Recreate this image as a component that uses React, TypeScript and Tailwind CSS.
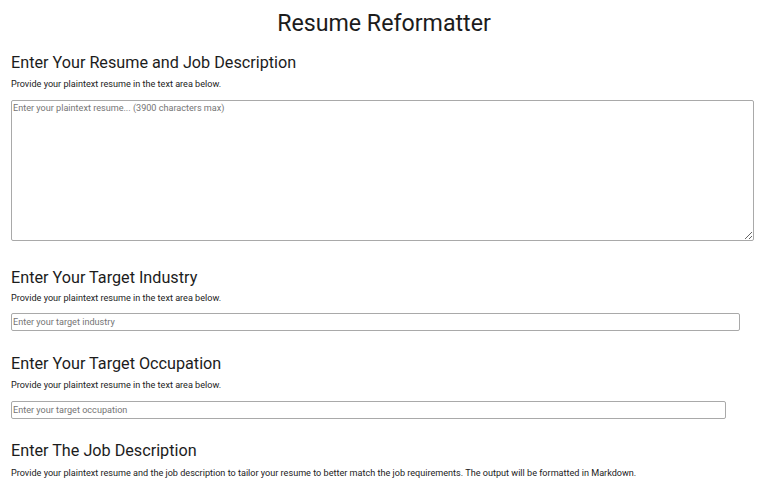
export default function App() {
  const font = { fontFamily: "Roboto, 'Liberation Sans', sans-serif" };
  return (
    <div className="min-h-screen bg-white text-[#1c1c1c]" style={font}>
      <h1 className="pt-[9px] text-center text-[23.2px] leading-[28px] font-normal">Resume Reformatter</h1>
      <main className="px-[11px]">
        <section className="mt-[16px]">
          <h2 className="text-[16.2px] leading-[20px] font-normal">Enter Your Resume and Job Description</h2>
          <p className="mt-[5px] text-[9.1px] leading-[12px] text-[#222]">Provide your plaintext resume in the text area below.</p>
          <textarea
            className="mt-[10px] block w-[743px] h-[141px] border border-[#a9a9a9] rounded-[2px] px-[1px] py-[1px] text-[9.1px] leading-[12px] placeholder:text-[#757575] resize-y"
            placeholder="Enter your plaintext resume... (3900 characters max)"
          />
        </section>
        <section className="mt-[27px]">
          <h2 className="text-[16.2px] leading-[20px] font-normal">Enter Your Target Industry</h2>
          <p className="mt-[4px] text-[9.1px] leading-[12px] text-[#222]">Provide your plaintext resume in the text area below.</p>
          <input
            className="mt-[9px] block w-[729px] h-[18px] border border-[#a9a9a9] rounded-[2px] px-[1px] text-[9.1px] placeholder:text-[#757575]"
            placeholder="Enter your target industry"
          />
        </section>
        <section className="mt-[23px]">
          <h2 className="text-[16.2px] leading-[20px] font-normal">Enter Your Target Occupation</h2>
          <p className="mt-[5px] text-[9.1px] leading-[12px] text-[#222]">Provide your plaintext resume in the text area below.</p>
          <input
            className="mt-[10px] block w-[715px] h-[18px] border border-[#a9a9a9] rounded-[2px] px-[1px] text-[9.1px] placeholder:text-[#757575]"
            placeholder="Enter your target occupation"
          />
        </section>
        <section className="mt-[22px]">
          <h2 className="text-[16.2px] leading-[20px] font-normal">Enter The Job Description</h2>
          <p className="mt-[6px] text-[9.1px] leading-[12px] text-[#222]">
            Provide your plaintext resume and the job description to tailor your resume to better match the job requirements. The output will be formatted in Markdown.
          </p>
        </section>
      </main>
    </div>
  );
}
